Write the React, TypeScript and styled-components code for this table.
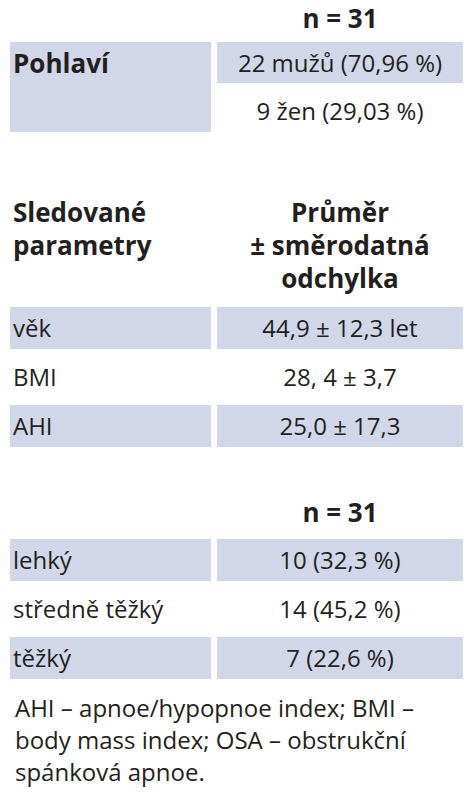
import styled, { createGlobalStyle } from "styled-components";

const GlobalStyle = createGlobalStyle`
  html, body {
    margin: 0;
    padding: 0;
    background: #ffffff;
  }
  body {
    font-family: "Open Sans", "Noto Sans", sans-serif;
    color: #231f20;
  }
`;

const Page = styled.div`
  width: 470px;
  padding: 0 0 0 4px;
  box-sizing: border-box;
`;

const Table = styled.table<{ $gapTop?: number }>`
  width: 465px;
  table-layout: fixed;
  border-collapse: separate;
  border-spacing: 6px 7px;
  margin-top: ${(p) => p.$gapTop ?? 0}px;
  font-size: 24px;
`;

const LabelCol = styled.col`
  width: 201px;
`;

const ValueCol = styled.col`
  width: 246px;
`;

const Cell = styled.td<{ $shaded?: boolean; $center?: boolean; $bold?: boolean }>`
  height: 42px;
  padding: 0 3px;
  box-sizing: border-box;
  background: ${(p) => (p.$shaded ? "#d2d6e9" : "transparent")};
  text-align: ${(p) => (p.$center ? "center" : "left")};
  font-weight: ${(p) => (p.$bold ? 700 : 400)};
  font-size: ${(p) => (p.$bold ? 26 : 24)}px;
  vertical-align: middle;
  line-height: 26px;
  white-space: nowrap;
`;

const TopCell = styled(Cell)`
  vertical-align: top;
  padding-top: 8px;
`;

// the first table sits at the very top of the page, so its count
// label is nudged down a little to keep the glyph box on the page
const CountHead = styled.th<{ $atTop?: boolean }>`
  height: 28px;
  padding: ${(p) => (p.$atTop ? "3px 0 9px" : "0 0 12px")};
  box-sizing: border-box;
  font-size: 26px;
  line-height: 16px;
  font-weight: 700;
  text-align: center;
  vertical-align: top;
`;

const MultiHead = styled.th<{ $align: "left" | "center" }>`
  height: 104px;
  padding: 0 3px 5px;
  box-sizing: border-box;
  vertical-align: top;
  text-align: ${(p) => p.$align};
  font-size: 26px;
  font-weight: 700;
  line-height: 33px;
`;

const Note = styled.p`
  margin: 6px 0 0 11px;
  width: 440px;
  font-size: 24px;
  line-height: 32px;
`;

const stats = [
  { label: "věk", value: "44,9 ± 12,3 let", shaded: true },
  { label: "BMI", value: "28, 4 ± 3,7", shaded: false },
  { label: "AHI", value: "25,0 ± 17,3", shaded: true },
];

const severity = [
  { label: "lehký", value: "10 (32,3 %)", shaded: true },
  { label: "středně těžký", value: "14 (45,2 %)", shaded: false },
  { label: "těžký", value: "7 (22,6 %)", shaded: true },
];

export default function App() {
  return (
    <Page>
      <GlobalStyle />
      <Table>
        <colgroup>
          <LabelCol />
          <ValueCol />
        </colgroup>
        <thead>
          <tr>
            <CountHead $atTop />
            <CountHead $atTop>n = 31</CountHead>
          </tr>
        </thead>
        <tbody>
          <tr>
            <TopCell $shaded $bold rowSpan={2}>
              Pohlaví
            </TopCell>
            <Cell $shaded $center style={{ height: 41 }}>
              22 mužů (70,96 %)
            </Cell>
          </tr>
          <tr>
            <Cell $center>9 žen (29,03 %)</Cell>
          </tr>
        </tbody>
      </Table>

      <Table $gapTop={50}>
        <colgroup>
          <LabelCol />
          <ValueCol />
        </colgroup>
        <thead>
          <tr>
            <MultiHead $align="left">
              Sledované
              <br />
              parametry
            </MultiHead>
            <MultiHead $align="center">
              Průměr
              <br />± směrodatná
              <br />
              odchylka
            </MultiHead>
          </tr>
        </thead>
        <tbody>
          {stats.map((r) => (
            <tr key={r.label}>
              <Cell $shaded={r.shaded}>{r.label}</Cell>
              <Cell $shaded={r.shaded} $center>
                {r.value}
              </Cell>
            </tr>
          ))}
        </tbody>
      </Table>

      <Table $gapTop={43}>
        <colgroup>
          <LabelCol />
          <ValueCol />
        </colgroup>
        <thead>
          <tr>
            <CountHead />
            <CountHead>n = 31</CountHead>
          </tr>
        </thead>
        <tbody>
          {severity.map((r) => (
            <tr key={r.label}>
              <Cell $shaded={r.shaded}>{r.label}</Cell>
              <Cell $shaded={r.shaded} $center>
                {r.value}
              </Cell>
            </tr>
          ))}
        </tbody>
      </Table>

      <Note>
        AHI – apnoe/hypopnoe index; BMI – body mass index; OSA – obstrukční spánková apnoe.
      </Note>
    </Page>
  );
}
